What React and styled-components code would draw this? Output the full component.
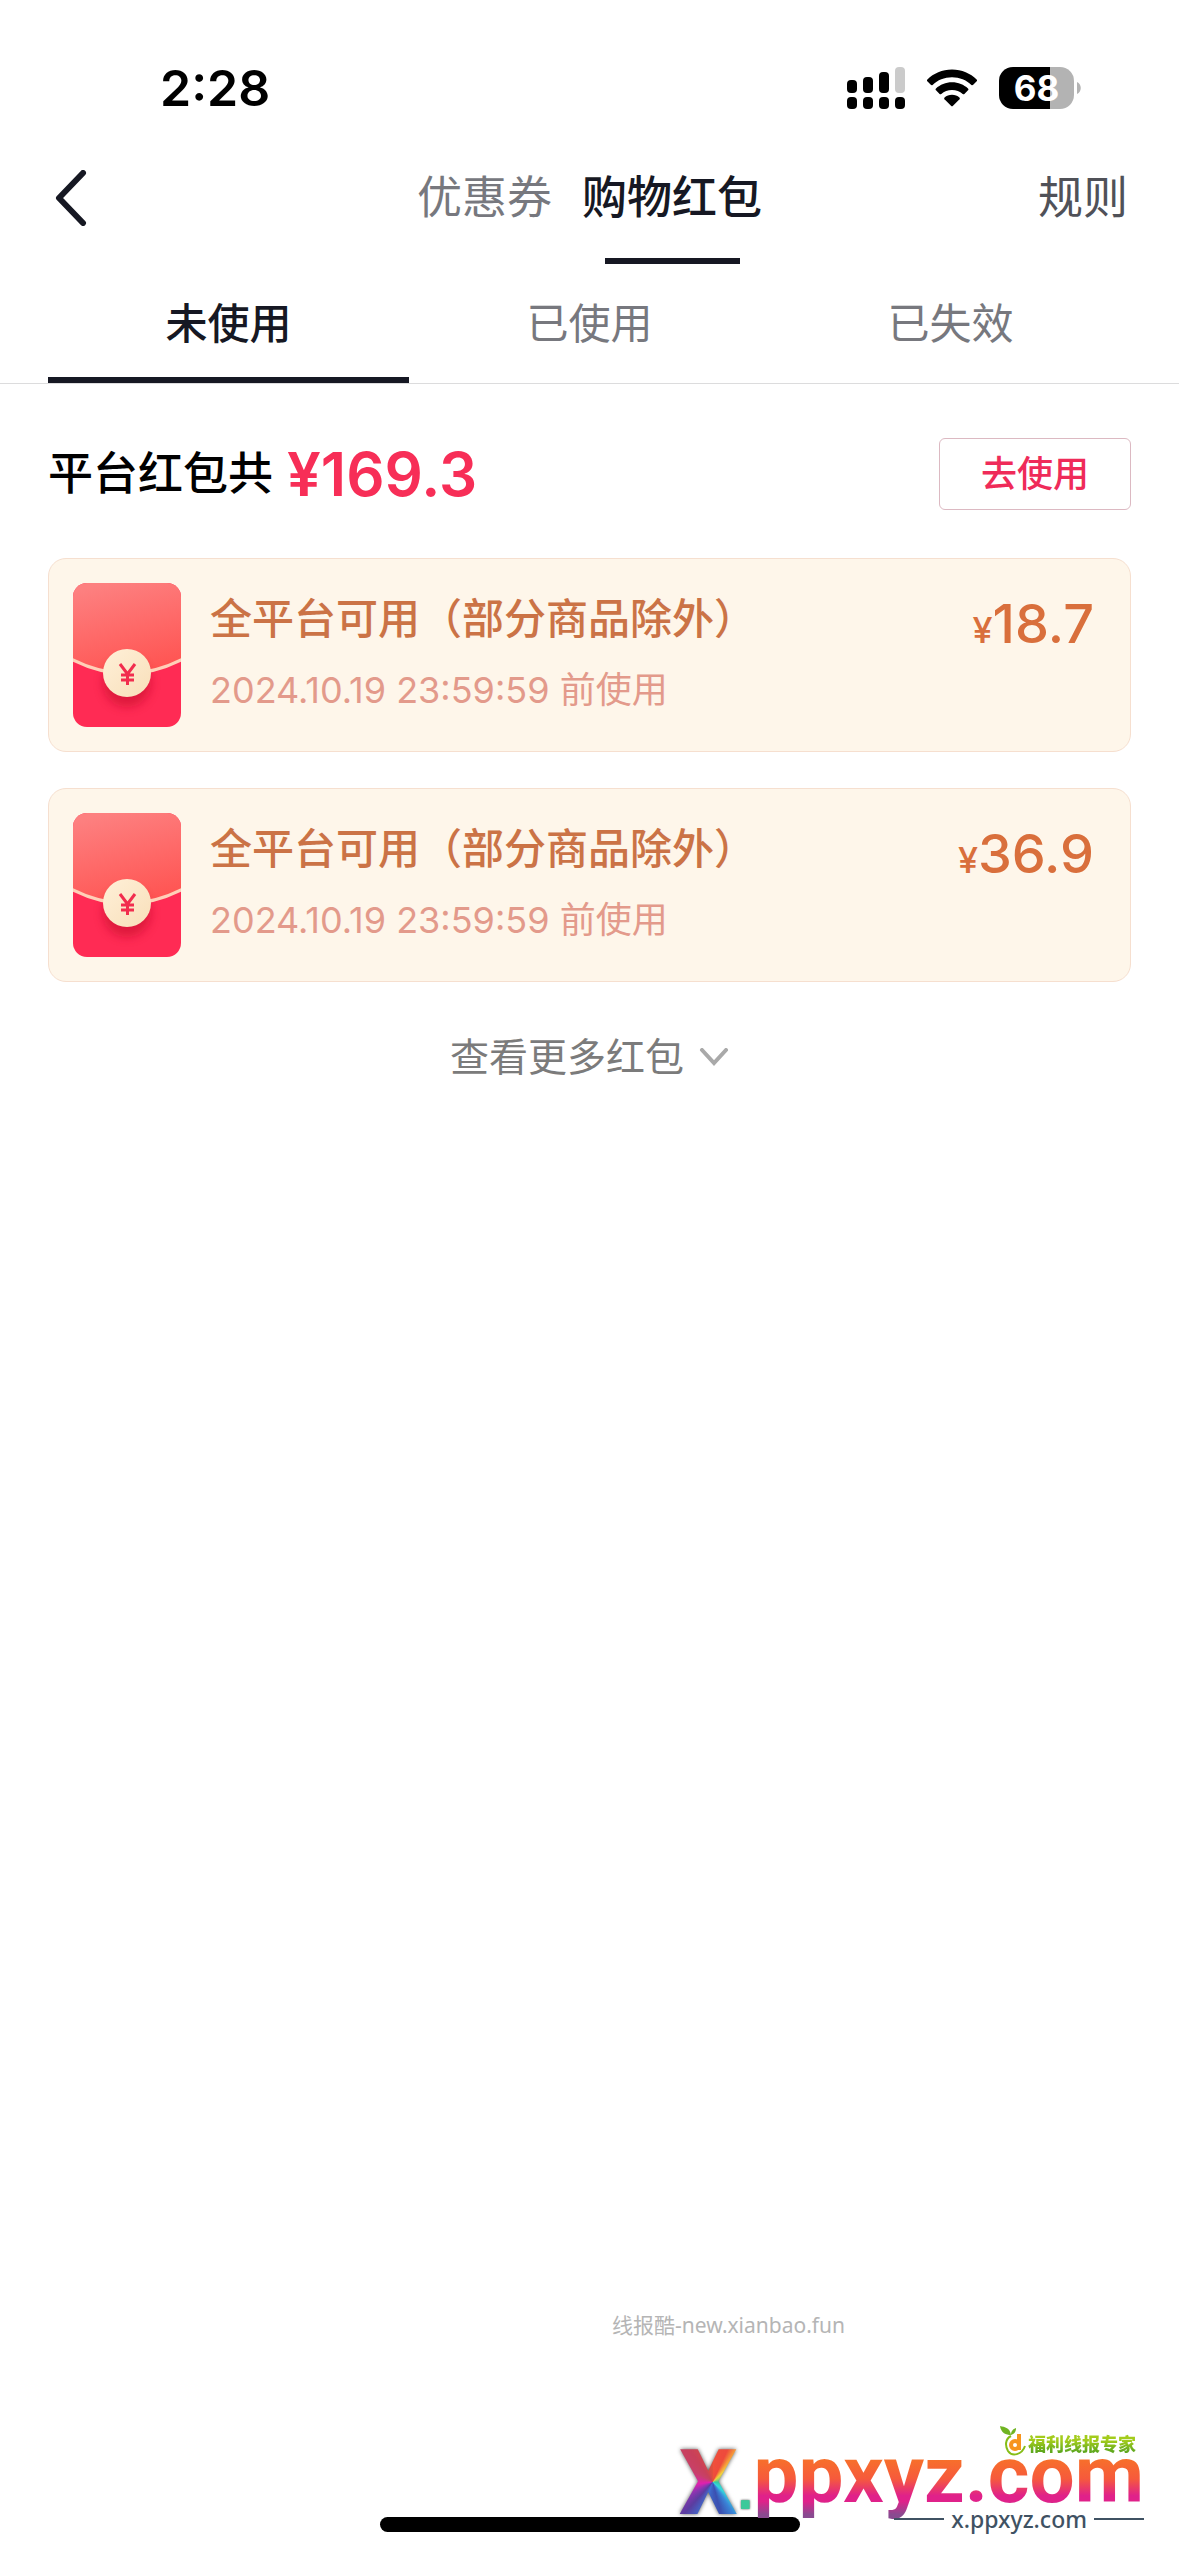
import React, { useState } from 'react'
import styled, { createGlobalStyle } from "styled-components";

const navTabs = ['优惠券', '购物红包'];
const statusTabs = ['未使用', '已使用', '已失效'];
const packets = [
    { id: 1, title: '全平台可用（部分商品除外）', expire: '2024.10.19 23:59:59 前使用', amount: '18.7' },
    { id: 2, title: '全平台可用（部分商品除外）', expire: '2024.10.19 23:59:59 前使用', amount: '36.9' },
];

function SignalIcon() {
    return (
        <svg width="58" height="42" viewBox="0 0 58 42" aria-hidden="true">
            <rect x="0" y="13" width="10" height="13" rx="4" />
            <rect x="16" y="10" width="10" height="16" rx="4" />
            <rect x="32" y="5" width="10" height="21" rx="4" />
            <rect x="48" y="0" width="10" height="26" rx="4" fill="#cbcbcb" />
            <rect x="0" y="30" width="10" height="12" rx="4" />
            <rect x="16" y="30" width="10" height="12" rx="4" />
            <rect x="32" y="30" width="10" height="12" rx="4" />
            <rect x="48" y="30" width="10" height="12" rx="4" />
        </svg>
    );
}

function WifiIcon() {
    return (
        <svg width="50" height="38" viewBox="0 0 50 38" aria-hidden="true">
            <path d="M25 0.5C34.8 0.5 43.5 4.4 49.6 10.4C50.2 11 50.2 11.6 49.7 12.2L46.2 15.8C45.6 16.4 45 16.4 44.4 15.9C39.4 11.1 32.6 8.3 25 8.3C17.4 8.3 10.6 11.1 5.6 15.9C5 16.4 4.4 16.4 3.8 15.8L0.3 12.2C-0.2 11.6 -0.2 11 0.4 10.4C6.5 4.4 15.2 0.5 25 0.5Z" />
            <path d="M25 13.3C31.3 13.3 36.9 15.7 41 19.5C41.6 20.1 41.6 20.8 41 21.3L37.4 24.9C36.9 25.4 36.3 25.4 35.7 24.9C32.9 22.4 29.1 20.9 25 20.9C20.9 20.9 17.1 22.4 14.3 24.9C13.7 25.4 13.1 25.4 12.6 24.9L9 21.3C8.4 20.8 8.4 20.1 9 19.5C13.1 15.7 18.7 13.3 25 13.3Z" />
            <path d="M25 25.8C27.9 25.8 30.5 26.8 32.4 28.5C33 29.1 33 29.7 32.5 30.3L26 36.8C25.3 37.5 24.7 37.5 24 36.8L17.5 30.3C17 29.7 17 29.1 17.6 28.5C19.5 26.8 22.1 25.8 25 25.8Z" />
        </svg>
    );
}

function Envelope({ id }) {
    return (
        <svg width="108" height="144" viewBox="0 0 108 144" aria-hidden="true">
            <defs>
                <linearGradient id={`flap${id}`} x1="0.3" y1="0" x2="0.6" y2="1">
                    <stop offset="0" stopColor="#fd8080" />
                    <stop offset="1" stopColor="#ff5452" />
                </linearGradient>
                <linearGradient id={`coin${id}`} x1="0" y1="0" x2="1" y2="1">
                    <stop offset="0" stopColor="#fff0d8" />
                    <stop offset="1" stopColor="#f8dfba" />
                </linearGradient>
                <clipPath id={`clip${id}`}>
                    <rect width="108" height="144" rx="14" />
                </clipPath>
                <filter id={`shade${id}`} x="-50%" y="-50%" width="200%" height="200%">
                    <feGaussianBlur stdDeviation="5" />
                </filter>
            </defs>
            <g clipPath={`url(#clip${id})`}>
                <rect width="108" height="144" fill="#ff2b54" />
                <path d="M0 0H108V77Q54 105 0 77Z" fill={`url(#flap${id})`} />
                <circle cx="54" cy="100" r="24" fill="#c9102f" opacity="0.6" filter={`url(#shade${id})`} />
                <path d="M-2 76Q54 105 110 76" fill="none" stroke="#ffd0b8" strokeWidth="3" />
            </g>
            <circle cx="54" cy="90" r="24" fill={`url(#coin${id})`} />
            <path d="M47 81L54.500 91L62 81M54.500 91V102M48 92H61M48 97H61" fill="none" stroke="#f22d4e" strokeWidth="3" />
        </svg>
    );
}

function FruitIcon() {
    return (
        <svg width="26" height="30" viewBox="0 0 26 30" aria-hidden="true">
            <path d="M0 0C5 1 10 2 11 9C6 9 1 7 0 0Z" fill="#6fb422" />
            <path d="M11 9C11 5 13 3 16 2C16 6 14 8 11 9Z" fill="#6fb422" />
            <path d="M11 10C5 13 5 20 8 25C12 31 22 29 25 20" fill="none" stroke="#85bd16" strokeWidth="2" />
            <circle cx="15" cy="19" r="4" fill="none" stroke="#f7941d" strokeWidth="4" />
            <path d="M19 8V24" stroke="#f7941d" strokeWidth="4" />
        </svg>
    );
}

function App() {
    const [nav, setNav] = useState(1);
    const [status, setStatus] = useState(0);

    return (
        <Page>
            <GlobalStyle />
            <StatusBar>
                <Clock>2:28</Clock>
                <StatusIcons>
                    <SignalIcon />
                    <WifiIcon />
                    <Battery>
                        <BatteryBody>68</BatteryBody>
                        <svg width="4" height="12" viewBox="0 0 4 12" aria-hidden="true">
                            <path d="M0 0C5 2 5 10 0 12Z" fill="#b3b3b3" />
                        </svg>
                    </Battery>
                </StatusIcons>
            </StatusBar>
            <Header>
                <BackButton aria-label="返回">
                    <svg width="40" height="56" viewBox="0 0 40 56" aria-hidden="true">
                        <path d="M32 3L8 28L32 53" fill="none" stroke="#161823" strokeWidth="6" strokeLinecap="round" strokeLinejoin="round" />
                    </svg>
                </BackButton>
                <NavTabs>
                    {navTabs.map((name, i) => (
                        <NavTab key={name} $active={i === nav} onClick={() => setNav(i)}>{name}</NavTab>
                    ))}
                </NavTabs>
                <RuleLink href="#rules">规则</RuleLink>
            </Header>
            <StatusTabs>
                {statusTabs.map((name, i) => (
                    <StatusTab key={name} $active={i === status} onClick={() => setStatus(i)}>{name}</StatusTab>
                ))}
            </StatusTabs>
            <Content>
                <Summary>
                    <Total>平台红包共<strong>¥169.3</strong></Total>
                    <UseButton>去使用</UseButton>
                </Summary>
                <PacketList>
                    {packets.map((item) => (
                        <Packet key={item.id}>
                            <Envelope id={item.id} />
                            <PacketInfo>
                                <PacketTitle>{item.title}</PacketTitle>
                                <Expire>{item.expire}</Expire>
                            </PacketInfo>
                            <Amount><small>¥</small>{item.amount}</Amount>
                        </Packet>
                    ))}
                </PacketList>
                <MoreButton>
                    查看更多红包
                    <svg width="30" height="18" viewBox="0 0 30 18" aria-hidden="true">
                        <path d="M3 2L15 15L27 2" fill="none" stroke="#a9a9a9" strokeWidth="4" strokeLinecap="round" />
                    </svg>
                </MoreButton>
            </Content>
            <HomeBar />
            <SourceMark>线报酷-new.xianbao.fun</SourceMark>
            <Brand>
                <BrandTag><FruitIcon /><span>福利线报专家</span></BrandTag>
                <BrandName>
                    <BrandX>X</BrandX>
                    <BrandDot>.</BrandDot>
                    <BrandText>ppxyz.com</BrandText>
                </BrandName>
                <BrandUrl>x.ppxyz.com</BrandUrl>
            </Brand>
        </Page>
    );
}

const GlobalStyle = createGlobalStyle`
  body {
    margin: 0;
    background: #fff;
    font-family: Inter, "Noto Sans CJK SC", sans-serif;
  }
  * {
    box-sizing: border-box;
  }
  button {
    padding: 0;
    border: 0;
    background: none;
    font-family: inherit;
    cursor: pointer;
  }
  svg {
    display: block;
    flex-shrink: 0;
  }
`;

const Page = styled.div`
  position: relative;
  display: flex;
  flex-direction: column;
  min-height: 100vh;
  background: #fff;
`;

const StatusBar = styled.div`
  display: flex;
  justify-content: space-between;
  align-items: center;
  height: 132px;
  padding: 44px 98px 0 160px;
  color: #000;
`;

const Clock = styled.span`
  font-size: 50px;
  font-weight: 600;
`;

const StatusIcons = styled.div`
  display: flex;
  align-items: center;
  gap: 22px;
`;

const Battery = styled.div`
  display: flex;
  align-items: center;
  gap: 3px;
`;

const BatteryBody = styled.span`
  width: 75px;
  border-radius: 14px;
  background: linear-gradient(90deg, #000 68%, #b3b3b3 68%);
  color: #fff;
  font-size: 35px;
  font-weight: 700;
  line-height: 42px;
  text-align: center;
`;

const Header = styled.header`
  display: grid;
  grid-template-columns: 1fr auto 1fr;
  height: 132px;
  padding: 0 51px;
`;

const BackButton = styled.button`
  justify-self: start;
`;

const NavTabs = styled.nav`
  display: flex;
  gap: 30px;
`;

const NavTab = styled.button`
  position: relative;
  color: ${(props) => (props.$active ? '#161823' : '#77787e')};
  font-size: 45px;
  font-weight: ${(props) => (props.$active ? 500 : 400)};
  line-height: 60px;

  &::after {
    content: '';
    display: ${(props) => (props.$active ? 'block' : 'none')};
    position: absolute;
    left: calc(50% - 67px);
    bottom: 0;
    width: 135px;
    height: 6px;
    background: #161823;
  }
`;

const RuleLink = styled.a`
  place-self: center end;
  color: #505158;
  font-size: 45px;
  line-height: 60px;
  text-decoration: none;
`;

const StatusTabs = styled.nav`
  display: flex;
  height: 120px;
  padding: 0 48px;
  border-bottom: 1px solid #dcdcdd;
`;

const StatusTab = styled.button`
  flex: 1;
  border-top: 6px solid transparent;
  border-bottom: 6px solid ${(props) => (props.$active ? '#161823' : 'transparent')};
  color: ${(props) => (props.$active ? '#161823' : '#77787e')};
  font-size: 42px;
  font-weight: ${(props) => (props.$active ? 500 : 400)};
  line-height: 54px;
`;

const Content = styled.main`
  display: flex;
  flex-direction: column;
  padding: 54px 48px;
`;

const Summary = styled.div`
  display: flex;
  justify-content: space-between;
  align-items: center;
  margin-bottom: 48px;
`;

const Total = styled.div`
  display: flex;
  align-items: center;
  gap: 14px;
  color: #000;
  font-size: 45px;
  font-weight: 500;
  line-height: 72px;

  strong {
    color: #f72e57;
    font-size: 60px;
    font-weight: 600;
  }
`;

const UseButton = styled.button`
  width: 192px;
  height: 72px;
  && {
    border: 1px solid #dcb9c2;
  }
  border-radius: 6px;
  color: #ef2b59;
  font-size: 36px;
  font-weight: 500;
  line-height: 48px;
`;

const PacketList = styled.ul`
  display: flex;
  flex-direction: column;
  gap: 36px;
  margin: 0;
  padding: 0;
  list-style: none;
`;

const Packet = styled.li`
  display: flex;
  padding: 24px 36px 24px 24px;
  border: 1px solid #f6dfcf;
  border-radius: 18px;
  background: #fef6ea;
`;

const PacketInfo = styled.div`
  flex: 1;
  padding: 9px 0 0 29px;
`;

const PacketTitle = styled.div`
  margin-bottom: 20px;
  color: #cb7346;
  font-size: 42px;
  font-weight: 500;
  line-height: 54px;
`;

const Expire = styled.div`
  color: #e39a8b;
  font-size: 36px;
  line-height: 48px;
`;

const Amount = styled.div`
  padding-top: 8px;
  color: #d96f3c;
  font-size: 54px;
  font-weight: 500;
  line-height: 66px;

  small {
    font-size: 36px;
  }
`;

const MoreButton = styled.button`
  display: flex;
  align-items: center;
  align-self: center;
  gap: 15px;
  margin-top: 45px;
  color: #7b7b7b;
  font-size: 39px;
  line-height: 60px;
`;

const HomeBar = styled.div`
  width: 420px;
  height: 15px;
  margin: auto auto 24px;
  border-radius: 8px;
  background: #000;
`;

/* watermarks float over the page */
const SourceMark = styled.div`
  position: absolute;
  right: 334px;
  bottom: 217px;
  color: #b5b5b5;
  font-family: "Noto Sans", "Noto Sans CJK SC", sans-serif;
  font-size: 21px;
  line-height: 28px;
`;

const Brand = styled.div`
  position: absolute;
  right: 35px;
  bottom: 25px;
  display: flex;
  flex-direction: column;
  align-items: flex-end;
`;

const BrandTag = styled.div`
  display: flex;
  align-items: flex-end;
  gap: 2px;
  height: 30px;
  margin-right: 8px;
  font-size: 18px;
  font-weight: 900;
  line-height: 22px;

  span {
    background: linear-gradient(#a3cc1c 30%, #5fa81e 80%);
    background-clip: text;
    color: transparent;
  }
`;

/* the big letters reach above and below their own row */
const BrandName = styled.div`
  display: flex;
  align-items: flex-start;
  height: 79px;
  margin-top: -28px;
  font-family: Roboto, sans-serif;
  line-height: 94px;
`;

const BrandX = styled.span`
  padding-top: 3px;
  background: conic-gradient(from 0deg at 58% 50%, #f0503c, #ee4a3c 25deg, #f59a3a 36deg, #f3d03e 46deg, #35c8a0 90deg, #35d8dc 132deg, #3a86d8 146deg, #3b4fb0 165deg, #3f6fd0 200deg, #5a3da0 222deg, #8a35b0 240deg, #e020b0 262deg, #c8406a 300deg, #c8405a 325deg, #e0503c);
  background-clip: text;
  color: transparent;
  font-size: 90px;
  font-weight: 900;
  line-height: 105px;
  filter: drop-shadow(0 0 2px #555);
`;

const BrandDot = styled.span`
  padding-top: 14px;
  color: #3cc99a;
  font-family: "Liberation Sans", sans-serif;
  font-size: 60px;
  font-weight: 700;
  filter: drop-shadow(0 0 1px #555);
`;

const BrandText = styled.span`
  background: linear-gradient(#f7702a 33%, #f65a3c 54%, #e0218a 72%, #e0218a 78%, #8a4a90 92%);
  background-clip: text;
  color: transparent;
  font-size: 80px;
  font-weight: 700;
`;

const BrandUrl = styled.div`
  display: flex;
  align-items: center;
  gap: 7px;
  color: #3f5263;
  font-family: "Noto Sans", sans-serif;
  font-size: 23px;
  font-weight: 500;
  line-height: 24px;

  &::before,
  &::after {
    content: '';
    width: 50px;
    height: 2px;
    background: #3f5263;
  }
`;

export default App
